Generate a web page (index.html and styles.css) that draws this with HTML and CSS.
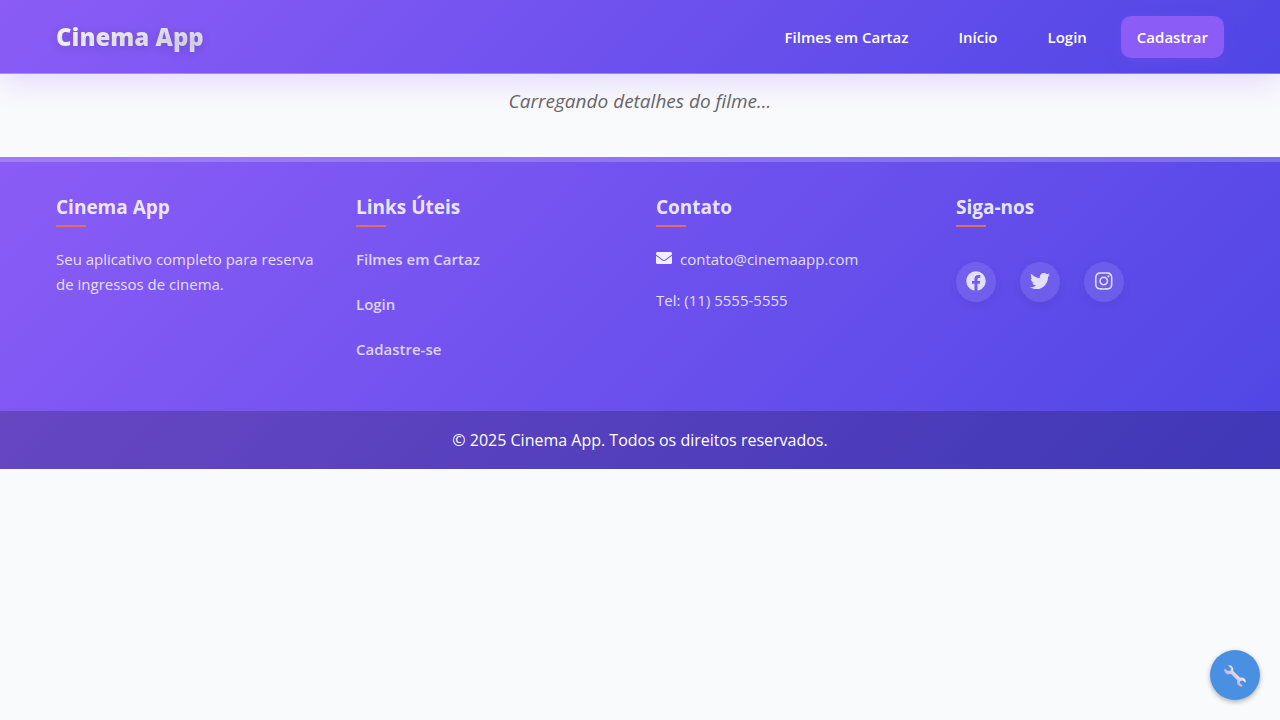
FILE: index.html
```html
<!DOCTYPE html>
<html lang="pt-BR">
<head>
<meta charset="utf-8">
<meta name="viewport" content="width=device-width, initial-scale=1">
<title>Cinema App</title>
<link rel="stylesheet" href="styles.css">
</head>
<body>
<header class="navbar">
  <div class="container navbar-inner">
    <a class="brand" href="#">Cinema App</a>
    <nav class="nav">
      <a class="nav-link" href="#">Filmes em Cartaz</a>
      <a class="nav-link" href="#">Início</a>
      <a class="nav-link" href="#">Login</a>
      <a class="nav-link nav-cta" href="#">Cadastrar</a>
    </nav>
  </div>
</header>
<main class="main">
  <p class="loading">Carregando detalhes do filme...</p>
</main>
<footer class="footer">
  <div class="footer-grid">
    <section class="footer-col">
      <h2 class="footer-title">Cinema App</h2>
      <p class="footer-text">Seu aplicativo completo para reserva de ingressos de cinema.</p>
    </section>
    <section class="footer-col">
      <h2 class="footer-title">Links Úteis</h2>
      <ul class="footer-links">
        <li><a class="footer-link" href="#">Filmes em Cartaz</a></li>
        <li><a class="footer-link" href="#">Login</a></li>
        <li><a class="footer-link" href="#">Cadastre-se</a></li>
      </ul>
    </section>
    <section class="footer-col">
      <h2 class="footer-title">Contato</h2>
      <p class="footer-text contact">
        <svg class="mail-icon" viewBox="0 0 512 512" aria-hidden="true"><path d="M502.300 190.800c3.900-3.100 9.700-.2 9.700 4.700V400c0 26.500-21.500 48-48 48H48c-26.500 0-48-21.500-48-48V195.600c0-5 5.700-7.800 9.700-4.700 22.400 17.400 52.100 39.500 154.100 113.600 21.100 15.400 56.700 47.800 92.200 47.600 35.700.3 72-32.800 92.300-47.600 102-74.100 131.600-96.300 154-113.700zM256 320c23.200.4 56.600-29.200 73.400-41.400 132.700-96.300 142.800-104.700 173.400-128.700 5.800-4.500 9.200-11.500 9.200-18.900v-19c0-26.500-21.500-48-48-48H48c-26.500 0-48 21.500-48 48v19c0 7.400 3.400 14.300 9.200 18.900 30.600 23.900 40.700 32.400 173.400 128.700 16.800 12.200 50.200 41.800 73.400 41.400z"/></svg>
        <span>contato@cinemaapp.com</span>
      </p>
      <p class="footer-text">Tel: (11) 5555-5555</p>
    </section>
    <section class="footer-col">
      <h2 class="footer-title">Siga-nos</h2>
      <div class="social">
        <a class="social-link" href="#" aria-label="Facebook"><svg class="social-icon" viewBox="0 0 512 512"><path d="M504 256C504 119 393 8 256 8S8 119 8 256c0 123.780 90.690 226.380 209.250 245V327.690h-63V256h63v-54.640c0-62.150 37-96.480 93.670-96.480 27.140 0 55.520 4.840 55.520 4.840v61h-31.280c-30.800 0-40.410 19.120-40.410 38.730V256h68.780l-11 71.690h-57.780V501C413.310 482.380 504 379.780 504 256z"/></svg></a>
        <a class="social-link" href="#" aria-label="Twitter"><svg class="social-icon" viewBox="0 0 512 512"><path d="M459.370 151.716c.325 4.548.325 9.097.325 13.645 0 138.720-105.583 298.558-298.558 298.558-59.452 0-114.680-17.219-161.137-47.106 8.447.974 16.568 1.299 25.340 1.299 49.055 0 94.213-16.568 130.274-44.832-46.132-.975-84.792-31.188-98.112-72.772 6.498.974 12.995 1.624 19.818 1.624 9.421 0 18.843-1.300 27.614-3.573-48.081-9.747-84.143-51.980-84.143-102.985v-1.299c13.969 7.797 30.214 12.670 47.431 13.319-28.264-18.843-46.781-51.005-46.781-87.391 0-19.492 5.197-37.360 14.294-52.954 51.655 63.675 129.300 105.258 216.365 109.807-1.624-7.797-2.599-15.918-2.599-24.040 0-57.828 46.782-104.934 104.934-104.934 30.213 0 57.502 12.670 76.670 33.137 23.715-4.548 46.456-13.320 66.599-25.340-7.798 24.366-24.366 44.833-46.132 57.827 21.117-2.273 41.584-8.122 60.426-16.243-14.292 20.791-32.161 39.308-52.628 54.253z"/></svg></a>
        <a class="social-link" href="#" aria-label="Instagram"><svg class="social-icon" viewBox="0 0 448 512"><path d="M224.100 141c-63.600 0-114.900 51.300-114.900 114.900s51.300 114.900 114.900 114.900S339 319.500 339 255.900 287.700 141 224.100 141zm0 189.600c-41.100 0-74.700-33.500-74.700-74.700s33.500-74.700 74.700-74.700 74.700 33.500 74.700 74.700-33.600 74.700-74.700 74.700zm146.400-194.300c0 14.900-12 26.800-26.800 26.800-14.900 0-26.800-12-26.800-26.800s12-26.800 26.800-26.800 26.800 12 26.800 26.800zm76.100 27.200c-1.700-35.900-9.900-67.700-36.200-93.900-26.200-26.200-58-34.400-93.900-36.200-37-2.100-147.900-2.100-184.900 0-35.800 1.700-67.600 9.900-93.900 36.100s-34.400 58-36.200 93.900c-2.100 37-2.100 147.900 0 184.900 1.700 35.900 9.900 67.700 36.200 93.900s58 34.400 93.900 36.200c37 2.100 147.900 2.100 184.900 0 35.900-1.700 67.700-9.900 93.900-36.200 26.200-26.200 34.400-58 36.200-93.900 2.100-37 2.100-147.800 0-184.800zM398.800 388c-7.800 19.600-22.900 34.700-42.600 42.600-29.500 11.700-99.500 9-132.100 9s-102.700 2.600-132.100-9c-19.600-7.800-34.700-22.900-42.600-42.600-11.700-29.500-9-99.500-9-132.100s-2.600-102.700 9-132.100c7.800-19.600 22.900-34.700 42.600-42.600 29.500-11.700 99.500-9 132.100-9s102.700-2.600 132.100 9c19.600 7.800 34.700 22.900 42.600 42.600 11.700 29.500 9 99.500 9 132.100s2.700 102.700-9 132.100z"/></svg></a>
      </div>
    </section>
  </div>
  <div class="footer-bottom"><p class="copyright">© 2025 Cinema App. Todos os direitos reservados.</p></div>
</footer>
<button class="tools-button" type="button" aria-label="Ferramentas">
  <svg class="tools-icon" viewBox="0 0 24 24" aria-hidden="true">
    <defs><linearGradient id="steel" x1="0" y1="1" x2="1" y2="0"><stop offset="0.3" stop-color="#b9a6cf"/><stop offset="0.6" stop-color="#eee0ee"/></linearGradient></defs>
    <path fill="url(#steel)" d="M5.300 2.400 8.200 5.300 7.700 7.600 5.100 8 1.500 5.400C.6 8.300 2.600 11.300 5.700 11.200L8 10.900 14.200 17.200C13.300 20.500 15.300 23.500 18.800 23.700L19.500 22.500 16.800 19.900 17.400 17.900 19.600 17.400 22.200 19.800 22.900 18.800C22.900 15.800 20.200 14 17.100 14.700L10.200 8.100C10.700 4.600 8.700 1.800 5.300 2.400Z"/>
  </svg>
</button>
</body>
</html>
```
FILE: styles.css
```css
* { box-sizing: border-box; }
body {
  margin: 0;
  background: #f9fafc;
  color: #666;
  font-family: "Segoe UI", "Open Sans", "Noto Sans", sans-serif;
  font-size: 15px;
  line-height: 25px;
}
a { color: inherit; text-decoration: none; }
h2, p, ul { margin: 0; padding: 0; }
ul { list-style: none; }
.container {
  max-width: 1200px;
  margin: 0 auto;
  padding: 0 16px;
}
.navbar {
  position: relative;
  padding: 16px 0 15px;
  background: linear-gradient(135deg, #8b5cf6, #4f46e5);
  border-bottom: 1px solid rgba(255, 255, 255, 0.3);
  background-origin: border-box;
  box-shadow: 0 8px 32px rgba(139, 92, 246, 0.2);
}
.navbar-inner {
  display: flex;
  align-items: center;
  justify-content: space-between;
}
.brand {
  font-size: 24px;
  font-weight: 800;
  line-height: 40px;
  background: linear-gradient(135deg, #ffffff, #e2dcf6);
  -webkit-background-clip: text;
  background-clip: text;
  color: transparent;
  text-shadow: 0 2px 10px rgba(0, 0, 0, 0.14);
}
.nav { display: flex; gap: 18px; }
.nav-link {
  padding: 8px 16px;
  border-radius: 10px;
  color: #fff;
  font-weight: 600;
  line-height: 26px;
}
.nav-cta {
  background: #8b5cf6;
  box-shadow: 0 4px 15px rgba(139, 92, 246, 0.2);
}
.main {
  padding: 11px 16px 40px;
  text-align: center;
}
.loading {
  font-size: 19px;
  font-style: italic;
  line-height: 32px;
}
.footer {
  background: linear-gradient(135deg, #8b5cf6, #4f46e5);
  border-top: 5px solid rgba(255, 255, 255, 0.2);
  background-origin: border-box;
}
.footer-grid {
  display: grid;
  grid-template-columns: repeat(auto-fit, minmax(240px, 1fr));
  max-width: 1200px;
  margin: 0 auto;
  padding: 30px 0 49px;
}
.footer-col { padding: 0 16px; }
.footer-title {
  margin-bottom: 20px;
  color: rgba(255, 255, 255, 0.87);
  font-size: 19px;
  font-weight: 700;
  line-height: 30px;
}
.footer-title::after {
  content: "";
  display: block;
  width: 30px;
  height: 2px;
  margin-top: 3px;
  background: #e0705a;
}
.footer-text {
  margin-bottom: 16px;
  color: rgba(255, 255, 255, 0.83);
}
.footer-links {
  display: grid;
  gap: 20px;
}
.footer-link {
  color: rgba(255, 255, 255, 0.75);
  font-weight: 600;
}
.contact {
  display: flex;
  align-items: center;
  gap: 8px;
}
.mail-icon {
  width: 16px;
  height: 16px;
  margin-bottom: 3px;
  fill: #f0edfd;
}
.social {
  display: flex;
  gap: 24px;
  padding-top: 15px;
}
.social-link {
  display: flex;
  align-items: center;
  justify-content: center;
  width: 40px;
  height: 40px;
  padding-bottom: 2px;
  border-radius: 50%;
  background: rgba(255, 255, 255, 0.1);
  box-shadow: 0 4px 10px rgba(0, 0, 0, 0.06);
}
.social-icon {
  height: 20px;
  fill: rgba(255, 255, 255, 0.8);
}
.footer-bottom {
  padding: 17px 16px 16px;
  background: rgba(0, 0, 0, 0.2);
  color: #fff;
  text-align: center;
}
.copyright { font-size: 16px; }
.tools-button {
  position: fixed;
  right: 20px;
  bottom: 20px;
  display: flex;
  align-items: center;
  justify-content: center;
  width: 50px;
  height: 50px;
  padding: 0;
  border: 0;
  border-radius: 50%;
  background: #4a90e2;
  box-shadow: 0 2px 5px rgba(0, 0, 0, 0.3);
}
.tools-icon { width: 24px; height: 24px; }
```
